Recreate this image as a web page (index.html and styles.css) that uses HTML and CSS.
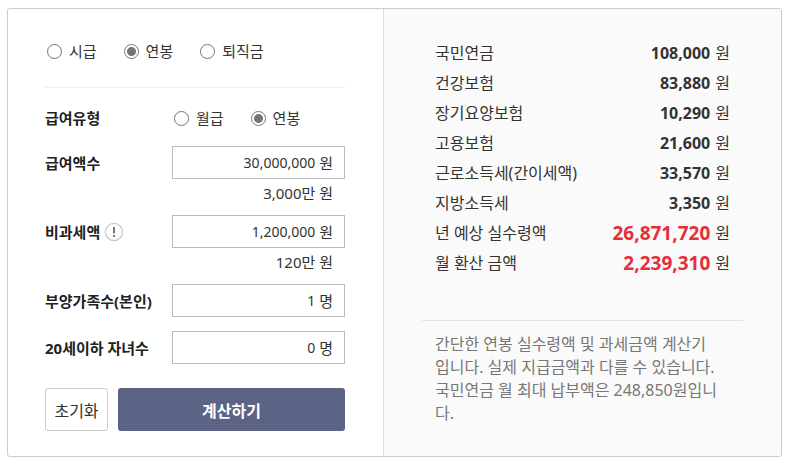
FILE: index.html
```html
<!DOCTYPE html>
<html lang="ko">
<head>
    <meta charset="UTF-8">
    <meta name="viewport" content="width=device-width, initial-scale=1.0">
    <title>연봉 계산기</title>
    <link rel="stylesheet" href="styles.css">
</head>
<body>
    <div class="calculator">
        <form class="input-area">
            <div class="calc-type">
                <label class="radio"><input type="radio" name="calc-type">시급</label>
                <label class="radio"><input type="radio" name="calc-type" checked>연봉</label>
                <label class="radio"><input type="radio" name="calc-type">퇴직금</label>
            </div>

            <div class="row pay-type">
                <span class="title">급여유형</span>
                <div class="radios">
                    <label class="radio"><input type="radio" name="pay-type">월급</label>
                    <label class="radio"><input type="radio" name="pay-type" checked>연봉</label>
                </div>
            </div>

            <div class="row">
                <label class="title" for="salary">급여액수</label>
                <div class="field"><input type="text" id="salary" value="30,000,000"><span>원</span></div>
                <p class="hint">3,000만 원</p>
            </div>

            <div class="row">
                <div class="title">
                    <label for="tax-free">비과세액</label>
                    <button type="button" class="help" aria-label="도움말">
                        <svg width="20" height="20" viewBox="0 0 20 20">
                            <circle cx="10" cy="10" r="8.6" fill="#fff" stroke="#c9c9d0" stroke-width="1.3"/>
                            <path d="M9 5h2v6.5H9zM9 13h2v2H9z" fill="#777"/>
                        </svg>
                    </button>
                </div>
                <div class="field"><input type="text" id="tax-free" value="1,200,000"><span>원</span></div>
                <p class="hint">120만 원</p>
            </div>

            <div class="row">
                <label class="title" for="family">부양가족수(본인)</label>
                <div class="field"><input type="text" id="family" value="1"><span>명</span></div>
            </div>

            <div class="row">
                <label class="title" for="children">20세이하 자녀수</label>
                <div class="field"><input type="text" id="children" value="0"><span>명</span></div>
            </div>

            <div class="buttons">
                <button type="reset" class="reset-btn">초기화</button>
                <button type="button" class="calc-btn">계산하기</button>
            </div>
        </form>

        <div class="result-area">
            <dl class="result">
                <div><dt>국민연금</dt><dd><strong>108,000</strong> 원</dd></div>
                <div><dt>건강보험</dt><dd><strong>83,880</strong> 원</dd></div>
                <div><dt>장기요양보험</dt><dd><strong>10,290</strong> 원</dd></div>
                <div><dt>고용보험</dt><dd><strong>21,600</strong> 원</dd></div>
                <div><dt>근로소득세(간이세액)</dt><dd><strong>33,570</strong> 원</dd></div>
                <div><dt>지방소득세</dt><dd><strong>3,350</strong> 원</dd></div>
                <div class="total"><dt>년 예상 실수령액</dt><dd><strong>26,871,720</strong> 원</dd></div>
                <div class="total"><dt>월 환산 금액</dt><dd><strong>2,239,310</strong> 원</dd></div>
            </dl>
            <p class="notice">간단한 연봉 실수령액 및 과세금액 계산기<br>입니다. 실제 지급금액과 다를 수 있습니다.<br>국민연금 월 최대 납부액은 248,850원입니<br>다.</p>
        </div>
    </div>
</body>
</html>
```

FILE: styles.css
```css
* {
  box-sizing: border-box;
}

body {
  margin: 8px 14px 12px 7px;
  font-family: "Noto Sans", "Noto Sans CJK KR", sans-serif;
  font-size: 16px;
  line-height: 22px;
  color: #333;
  background-color: #fff;
}

p, dl, dd {
  margin: 0;
}

input, button {
  font-family: inherit;
  color: inherit;
}

.calculator {
  display: grid;
  grid-template-columns: minmax(0, 375fr) minmax(0, 398fr);
  border: 1px solid #ccc;
  border-radius: 3px;
  overflow: hidden;
}

/* 입력 영역 */
.input-area {
  padding: 31px 38px 25px 37px;
}

.calc-type {
  display: flex;
  gap: 25px;
  padding-bottom: 25px;
  margin-bottom: 19px;
  border-bottom: 1px solid #eee;
}

.radio {
  display: flex;
  align-items: center;
  font-size: 15px;
}

.radio input {
  width: 15px;
  height: 15px;
  margin: 0 7px 0 2px;
  appearance: none;
  border: 1px solid #757575;
  border-radius: 50%;
}

.radio input:checked {
  background: radial-gradient(circle, #757575 4px, #fff 5px);
}

.row {
  display: grid;
  grid-template-columns: 127px minmax(0, 1fr);
  align-items: center;
  margin-bottom: 14px;
}

.pay-type {
  margin-bottom: 17px;
}

.radios {
  display: flex;
  gap: 25px;
}

.title {
  display: flex;
  align-items: center;
  gap: 4px;
  font-size: 15px;
  font-weight: bold;
  color: #222;
  white-space: nowrap;
}

.help {
  display: flex;
  padding: 0;
  border: 0;
  background: none;
  cursor: pointer;
}

.field {
  display: flex;
  align-items: center;
  gap: 4px;
  height: 33px;
  padding: 0 11px;
  border: 1px solid #bbb;
  font-size: 15px;
}

.field input {
  flex: 1;
  min-width: 0;
  padding: 0;
  border: 0;
  outline: 0;
  background: none;
  font-size: 14px;
  text-align: right;
}

.hint {
  grid-column: 2;
  padding: 3px 12px 0;
  margin-bottom: -3px;
  font-size: 15px;
  text-align: right;
}

.buttons {
  display: flex;
  gap: 10px;
  margin-top: 24px;
}

.buttons button {
  height: 43px;
  border-radius: 3px;
  font-size: 16px;
  cursor: pointer;
}

.buttons .reset-btn {
  width: 63px;
  padding: 0;
  border: 1px solid #ccc;
  background-color: #fff;
}

.buttons .calc-btn {
  flex: 1;
  border: 0;
  background-color: #5d6384;
  color: #fff;
  font-weight: bold;
}

/* 결과 영역 */
.result-area {
  padding: 29px 38px 24px;
  border-left: 1px solid #ddd;
  background-color: #fafafa;
}

.result {
  padding: 0 13px 42px;
  border-bottom: 1px solid #e5e5e5;
}

.result div {
  display: flex;
  justify-content: space-between;
  height: 30px;
  line-height: 30px;
}

.result dd {
  display: flex;
  gap: 5px;
}

.result .total strong {
  font-size: 19px;
  color: #e62e3a;
}

.notice {
  padding: 12px 13px 0;
  line-height: 23px;
  color: #777;
}
```
